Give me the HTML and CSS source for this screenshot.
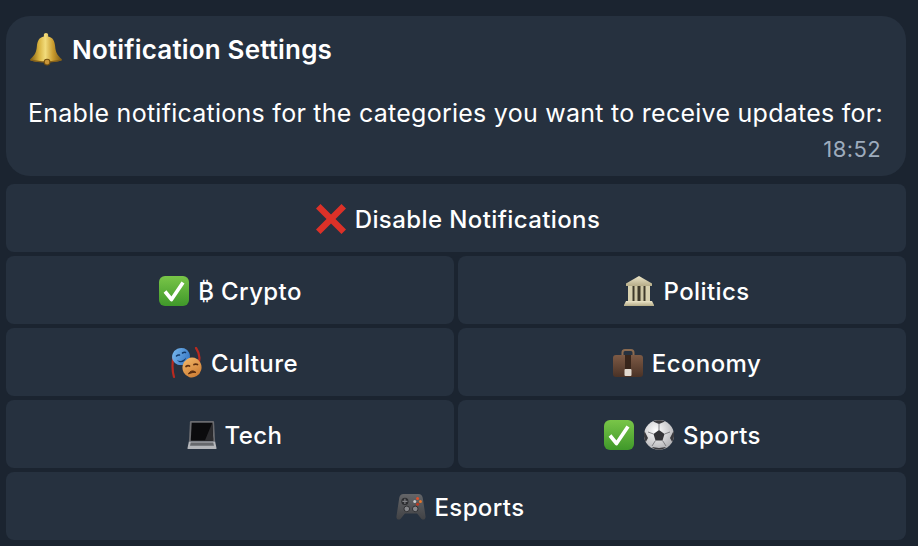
FILE: index.html
```html
<!DOCTYPE html>
<html lang="en">
<head>
<meta charset="utf-8">
<title>Notification Settings</title>
<link rel="stylesheet" href="styles.css">
</head>
<body>
<svg class="defs" width="0" height="0" aria-hidden="true">
<defs>
<linearGradient id="bellG" x1="0" x2="1" y1="0" y2="0"><stop offset="0" stop-color="#7d5a12"/><stop offset=".28" stop-color="#d8b23e"/><stop offset=".48" stop-color="#f2dc7c"/><stop offset=".72" stop-color="#c99b2e"/><stop offset="1" stop-color="#7a5812"/></linearGradient>
<linearGradient id="checkG" x1="0" x2="0" y1="0" y2="1"><stop offset="0" stop-color="#79c548"/><stop offset="1" stop-color="#3f982a"/></linearGradient>
<linearGradient id="caseG" x1="0" x2="0" y1="0" y2="1"><stop offset="0" stop-color="#7d5a45"/><stop offset="1" stop-color="#4a3226"/></linearGradient>
<linearGradient id="templeG" x1="0" x2="0" y1="0" y2="1"><stop offset="0" stop-color="#ece5c8"/><stop offset="1" stop-color="#b5ac88"/></linearGradient>
<linearGradient id="padG" x1="0" x2="0" y1="0" y2="1"><stop offset="0" stop-color="#646568"/><stop offset="1" stop-color="#414245"/></linearGradient>
<linearGradient id="blueG" x1="0" x2="1" y1="0" y2="1"><stop offset="0" stop-color="#7cbdf0"/><stop offset="1" stop-color="#2f6fc0"/></linearGradient>
<linearGradient id="orangeG" x1="0" x2="1" y1="0" y2="1"><stop offset="0" stop-color="#f4bb6c"/><stop offset="1" stop-color="#c9752c"/></linearGradient>
<radialGradient id="ballG" cx=".4" cy=".35" r=".75"><stop offset="0" stop-color="#fff"/><stop offset="1" stop-color="#a9a9ad"/></radialGradient>
<symbol id="i-bell" viewBox="0 0 32 32">
<path d="M16 1c1.200 0 2 .7 2 1.600v1.600C22.500 5 24.200 8.500 24.600 13.500c.4 5 1.800 8.500 6 11.800.8.700.7 1.300-.2 1.600-4 1.100-9.400 1.600-14.400 1.600s-10.400-.5-14.400-1.600c-.9-.3-1-.9-.2-1.600 4.200-3.300 5.600-6.800 6-11.800C7.800 8.500 9.500 5 14 4.200V2.600C14 1.700 14.800 1 16 1z" fill="url(#bellG)"/>
<path d="M2.500 25.800c8 2.200 19 2.200 27 0l1 1c-8 2.600-21 2.600-29 0z" fill="#84601a"/>
<circle cx="17" cy="28.300" r="2.700" fill="#c9963a" stroke="#76520f" stroke-width="1"/>
</symbol>
<symbol id="i-x" viewBox="0 0 32 32">
<path d="M1 5.500 5.500 1 16 11.500 26.500 1 31 5.500 20.500 16 31 26.500 26.500 31 16 20.500 5.500 31 1 26.500 11.500 16z" fill="#dc3128"/>
</symbol>
<symbol id="i-check" viewBox="0 0 32 32">
<rect x="1" y="1" width="30" height="30" rx="6" fill="url(#checkG)"/>
<path d="M7 16.500l6.500 8L25 7.500" fill="none" stroke="#fff" stroke-width="3.600" stroke-linejoin="round"/>
</symbol>
<symbol id="i-temple" viewBox="0 0 32 32">
<path d="M16 1 29 8.500V11H3V8.500z" fill="url(#templeG)"/>
<rect x="5" y="11" width="22" height="15" fill="#3f3a2b"/>
<rect x="5" y="11" width="4.500" height="15" fill="#d8d1af"/><rect x="11.500" y="11" width="3" height="15" fill="#cfc8a6"/><rect x="17.500" y="11" width="3" height="15" fill="#cfc8a6"/><rect x="22.500" y="11" width="4.500" height="15" fill="#d8d1af"/>
<path d="M3 26h26l2 4v1H1v-1z" fill="url(#templeG)"/>
</symbol>
<symbol id="i-masks" viewBox="0 0 32 32">
<path d="M2.500 10c-1.500 7-1.200 14 .5 20" fill="none" stroke="#b92a20" stroke-width="2.200" stroke-linecap="round"/>
<path d="M25 1c3.500 5 4 11 2.500 15" fill="none" stroke="#b92a20" stroke-width="2.200" stroke-linecap="round"/>
<ellipse cx="10" cy="9.500" rx="9" ry="8.500" transform="rotate(-25 10 9.500)" fill="url(#blueG)"/>
<path d="M5.500 9c1-1 2-1.200 3-1M11.500 6c1-.6 2-.8 3-.5" fill="none" stroke="#123a6a" stroke-width="1.500" stroke-linecap="round"/>
<path d="M6 13c3 1.800 6.500.8 9-2.500-.6 4.500-6 7-9 2.500z" fill="#123a6a"/>
<ellipse cx="21" cy="20.500" rx="9.500" ry="10" transform="rotate(15 21 20.500)" fill="url(#orangeG)"/>
<path d="M15 19.500c1-.8 2.500-1 3.500-.5M23 17.500c1-.5 2.300-.5 3.500 0" fill="none" stroke="#5b2e10" stroke-width="1.700" stroke-linecap="round"/>
<path d="M17.500 27c1.500-3.500 5-4 7.500-1.500-2.500-.3-5 .2-7.500 1.500z" fill="#5b2e10" stroke="#5b2e10"/>
</symbol>
<symbol id="i-case" viewBox="0 0 32 32">
<path d="M10.500 9V5.500C10.500 4 11.500 3 13 3h6c1.500 0 2.500 1 2.500 2.500V9" fill="none" stroke="#8a6a50" stroke-width="2"/>
<rect x="1" y="8" width="30" height="22" rx="3" fill="url(#caseG)"/>
<rect x="13" y="8" width="6" height="14" fill="#38251b"/>
<rect x="12.500" y="22" width="7" height="7" rx="1" fill="#e2dad0"/>
</symbol>
<symbol id="i-laptop" viewBox="0 0 32 32">
<path d="M4.500 1h23c.8 0 1.300.6 1.400 1.300L30 23H2L3.100 2.300C3.200 1.600 3.700 1 4.500 1z" fill="#6a6b6f"/>
<path d="M5 3h22l1 19H4z" fill="#0b0b0d"/>
<path d="M27 3l1 19h-9z" fill="#2b2b2e"/>
<path d="M2 23h28l1.500 7c0 .6-.4 1-1 1H1.500c-.6 0-1-.4-1-1z" fill="#b4b6ba"/>
<path d="M4 24h24l.8 3.500H3.200z" fill="#66686c"/>
</symbol>
<symbol id="i-ball" viewBox="0 0 32 32">
<circle cx="16" cy="16" r="15" fill="url(#ballG)"/>
<path d="M16 11l5.500 4-2 6.500h-7l-2-6.500z" fill="#333337"/>
<path d="M10 2.500 16 5l6-2.500C19 .8 13 .8 10 2.500zM1.500 12 5 19 2.800 23C.8 19 .5 16 1.500 12zM30.500 12 27 19l2.200 4c2-4 2.300-7 1.300-11zM9 28l7 1 7-1c-3 3.600-11 3.600-14 0z" fill="#3a3a3e"/>
<path d="M16 5v6M21.500 15 27 13M19.500 21.500 23 27M12.500 21.500 9 27M10.500 15 5 13" stroke="#77777b" stroke-width=".9"/>
</symbol>
<symbol id="i-pad" viewBox="0 0 32 32">
<path d="M8 2h16c2.500 0 4 1.500 4.500 4l3 20c.5 3-2.500 4.500-4.500 2.500L22.500 23h-13L5 28.500c-2 2-5 .5-4.500-2.500l3-20C4 3.500 5.500 2 8 2z" fill="url(#padG)"/>
<circle cx="9.500" cy="10" r="3.800" fill="#2c2d30"/>
<path d="M9.500 7.300v5.400M6.800 10h5.400" stroke="#808185" stroke-width="1.200"/>
<circle cx="23" cy="7" r="1.600" fill="#e0502a"/><circle cx="26" cy="10" r="1.600" fill="#e8752a"/><circle cx="20" cy="10" r="1.600" fill="#c8c8c8"/><circle cx="23" cy="13" r="1.600" fill="#bb3a22"/>
<circle cx="11.500" cy="18" r="3" fill="#85868a" stroke="#2c2d30"/><circle cx="20.500" cy="18" r="3" fill="#85868a" stroke="#2c2d30"/>
</symbol>
</defs>
</svg>
<main class="chat">
<section class="bubble">
<h1 class="title"><svg class="emoji emoji-title"><use href="#i-bell"/></svg> <span>Notification Settings</span></h1>
<p class="body">Enable notifications for the categories you want to receive updates for:</p>
<time class="stamp">18:52</time>
</section>
<div class="keyboard">
<button class="key wide key-disable"><svg class="emoji"><use href="#i-x"/></svg><span>Disable Notifications</span></button>
<button class="key"><svg class="emoji"><use href="#i-check"/></svg><span>₿ Crypto</span></button>
<button class="key key-lead"><svg class="emoji"><use href="#i-temple"/></svg><span>Politics</span></button>
<button class="key key-lead"><svg class="emoji"><use href="#i-masks"/></svg><span>Culture</span></button>
<button class="key key-lead"><svg class="emoji"><use href="#i-case"/></svg><span>Economy</span></button>
<button class="key key-lead"><svg class="emoji emoji-small"><use href="#i-laptop"/></svg><span>Tech</span></button>
<button class="key"><svg class="emoji"><use href="#i-check"/></svg><svg class="emoji"><use href="#i-ball"/></svg><span>Sports</span></button>
<button class="key wide key-lead"><svg class="emoji emoji-small"><use href="#i-pad"/></svg><span>Esports</span></button>
</div>
</main>
</body>
</html>
```

FILE: styles.css
```css
* { box-sizing: border-box; }
html, body { margin: 0; height: 100%; }
body {
  background: #1b2430;
  font-family: Inter, "Liberation Sans", sans-serif;
  color: #fff;
  overflow: hidden;
}
.defs { position: absolute; }
.chat { padding: 16px 12px 0 6px; }
.bubble {
  height: 160px;
  background: #26313f;
  border-radius: 24px;
  padding: 16px 23px 0 23px;
  display: flex;
  flex-direction: column;
}
.title {
  margin: 0;
  display: flex;
  align-items: center;
  gap: 9px;
  height: 34px;
  font-size: 26px;
  font-weight: 600;
  letter-spacing: .18px;
}
.body {
  margin: 30px 0 0 -1px;
  font-size: 25px;
  font-weight: 400;
  letter-spacing: .26px;
  line-height: 34px;
  white-space: nowrap;
}
.stamp {
  align-self: flex-end;
  margin: 4px 2px 0 0;
  font-size: 22px;
  letter-spacing: .4px;
  line-height: 30px;
  color: #9dabbc;
}
.keyboard {
  margin-top: 8px;
  display: grid;
  grid-template-columns: 1fr 1fr;
  grid-auto-rows: 68px;
  gap: 4px;
}
.key {
  display: flex;
  align-items: center;
  justify-content: center;
  gap: 8px;
  padding: 2px 0 0;
  border: 0;
  border-radius: 8px;
  background: #26313f;
  color: #fff;
  font-family: inherit;
  font-size: 24px;
  font-weight: 500;
  letter-spacing: .4px;
}
.key-lead { padding-left: 9px; }
.key-disable { padding-left: 3px; }
.wide { grid-column: 1 / -1; }
.emoji { width: 32px; height: 32px; flex: none; }
.emoji-title { width: 34px; height: 34px; }
.emoji-small { width: 30px; height: 30px; }
```
